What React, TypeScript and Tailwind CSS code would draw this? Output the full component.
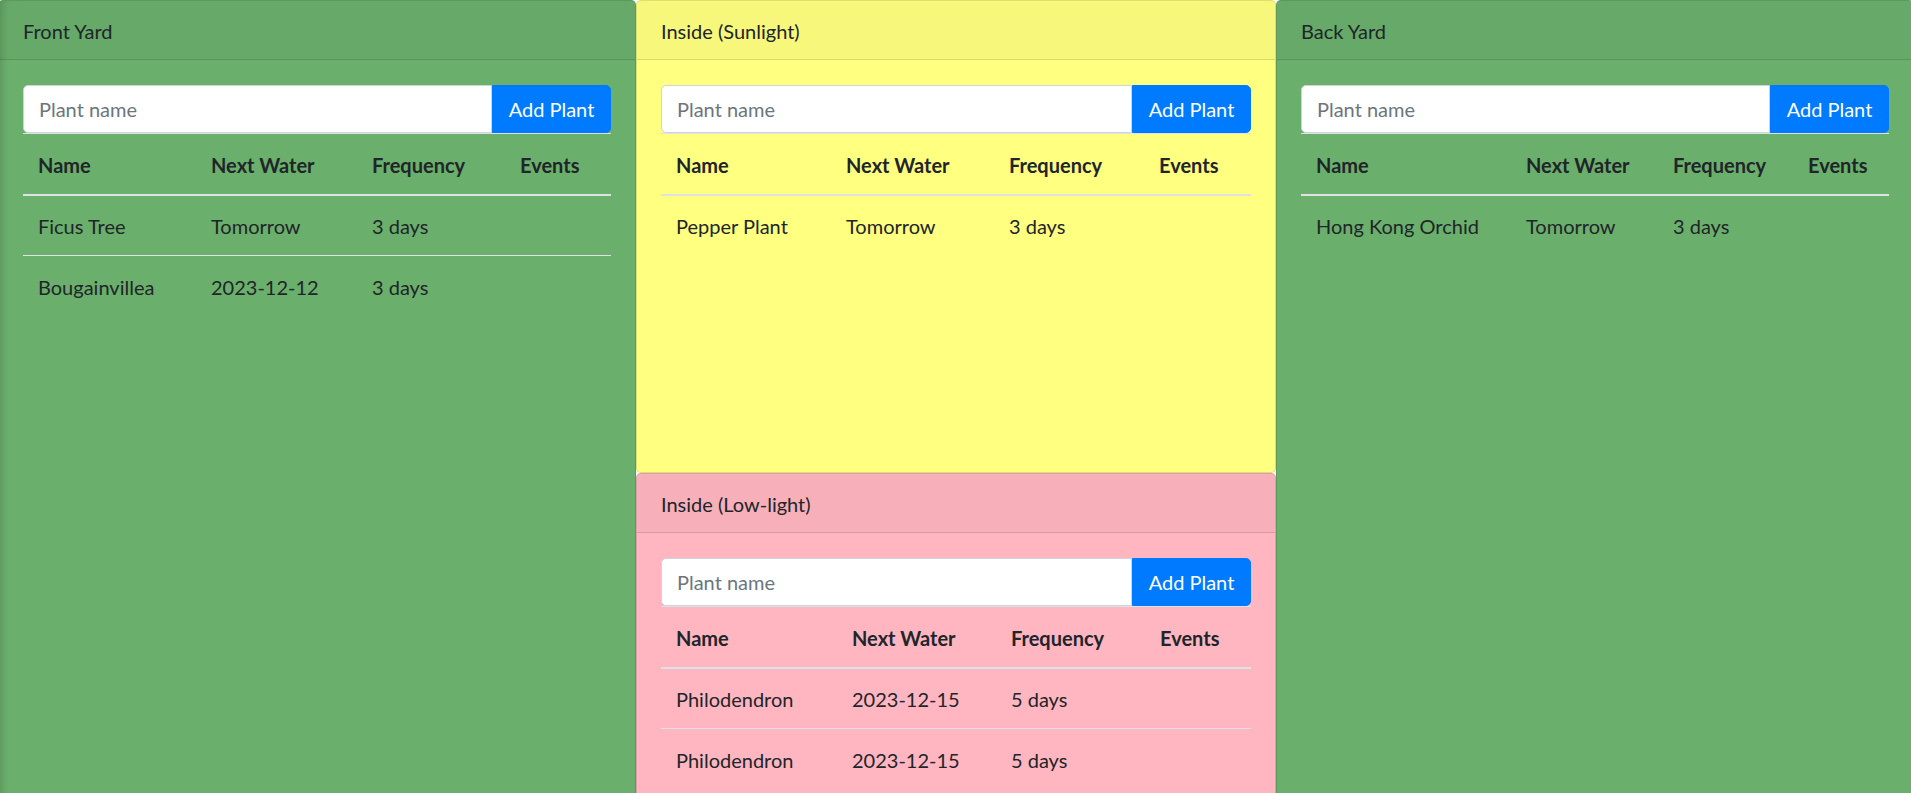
import React from "react";

type Row = [string, string, string];

type CardProps = {
  title: string;
  body: string;
  rows: Row[];
  widths: [string, string, string, string];
  className?: string;
};

function PlantCard({ title, body, rows, widths, className = "" }: CardProps) {
  return (
    <div className={`flex flex-col border border-black/[0.125] rounded-[5px] ${body} ${className}`}>
      <div className="h-[59px] flex items-center px-[24px] bg-black/[0.03] border-b border-black/[0.125] rounded-t-[4px]">
        <span className="pt-[1px]">{title}</span>
      </div>
      <div className="px-[24px] pt-[25px] pb-[25px] flex-1">
        <div className="flex h-[48px] w-full">
          <input
            type="text"
            placeholder="Plant name"
            className="flex-1 min-w-0 h-full bg-white border border-[#ced4da] rounded-l-[5px] px-[15px] text-[20px] text-[#495057] placeholder:text-[#6c757d] outline-none"
          />
          <button className="h-full w-[119px] shrink-0 bg-[#007bff] border border-[#007bff] text-white text-[20px] rounded-r-[5px]">
            Add Plant
          </button>
        </div>
        <table className="w-full table-fixed border-collapse">
          <thead>
            <tr>
              <th className={`${widths[0]} h-[61px] px-[15px] pt-[2px] text-left font-bold border-t border-b-2 border-[#dee2e6]`}>Name</th>
              <th className={`${widths[1]} h-[61px] px-[15px] pt-[2px] text-left font-bold border-t border-b-2 border-[#dee2e6]`}>Next Water</th>
              <th className={`${widths[2]} h-[61px] px-[15px] pt-[2px] text-left font-bold border-t border-b-2 border-[#dee2e6]`}>Frequency</th>
              <th className={`${widths[3]} h-[61px] px-[15px] pt-[2px] text-left font-bold border-t border-b-2 border-[#dee2e6]`}>Events</th>
            </tr>
          </thead>
          <tbody>
            {rows.map((r, i) => (
              <tr key={i}>
                <td className={`h-[61px] px-[15px] pt-[1px] whitespace-nowrap ${i > 0 ? "border-t border-[#dee2e6]" : ""}`}>{r[0]}</td>
                <td className={`h-[61px] px-[15px] pt-[1px] whitespace-nowrap ${i > 0 ? "border-t border-[#dee2e6]" : ""}`}>{r[1]}</td>
                <td className={`h-[61px] px-[15px] pt-[1px] whitespace-nowrap ${i > 0 ? "border-t border-[#dee2e6]" : ""}`}>{r[2]}</td>
                <td className={`h-[61px] px-[15px] pt-[1px] ${i > 0 ? "border-t border-[#dee2e6]" : ""}`}></td>
              </tr>
            ))}
          </tbody>
        </table>
      </div>
    </div>
  );
}

export default function App() {
  return (
    <div
      className="w-[1911px] h-[793px] overflow-hidden bg-white text-[20px] leading-[30px] text-[#212529]"
      style={{ fontFamily: "Lato, 'Segoe UI', 'Liberation Sans', sans-serif" }}
    >
      <div className="flex items-stretch -ml-[2px] w-[1916px]">
        <div className="w-[638px] shrink-0 flex">
          <PlantCard
            title="Front Yard"
            body="bg-[#6aaf6c]"
            className="w-full shadow-[inset_10px_0_8px_-8px_rgba(0,0,0,0.18)]"
            rows={[
              ["Ficus Tree", "Tomorrow", "3 days"],
              ["Bougainvillea", "2023-12-12", "3 days"],
            ]}
            widths={["w-[173px]", "w-[161px]", "w-[148px]", "w-[106px]"]}
          />
        </div>
        <div className="w-[640px] shrink-0 flex flex-col">
          <PlantCard
            title="Inside (Sunlight)"
            body="bg-[#ffff80]"
            className="h-[473px]"
            rows={[["Pepper Plant", "Tomorrow", "3 days"]]}
            widths={["w-[170px]", "w-[163px]", "w-[150px]", "w-[107px]"]}
          />
          <PlantCard
            title="Inside (Low-light)"
            body="bg-[#ffb6c1]"
            rows={[
              ["Philodendron", "2023-12-15", "5 days"],
              ["Philodendron", "2023-12-15", "5 days"],
            ]}
            widths={["w-[176px]", "w-[159px]", "w-[149px]", "w-[106px]"]}
          />
        </div>
        <div className="w-[638px] shrink-0 flex">
          <PlantCard
            title="Back Yard"
            body="bg-[#6aaf6c]"
            className="w-full"
            rows={[["Hong Kong Orchid", "Tomorrow", "3 days"]]}
            widths={["w-[210px]", "w-[147px]", "w-[135px]", "w-[96px]"]}
          />
        </div>
      </div>
    </div>
  );
}
